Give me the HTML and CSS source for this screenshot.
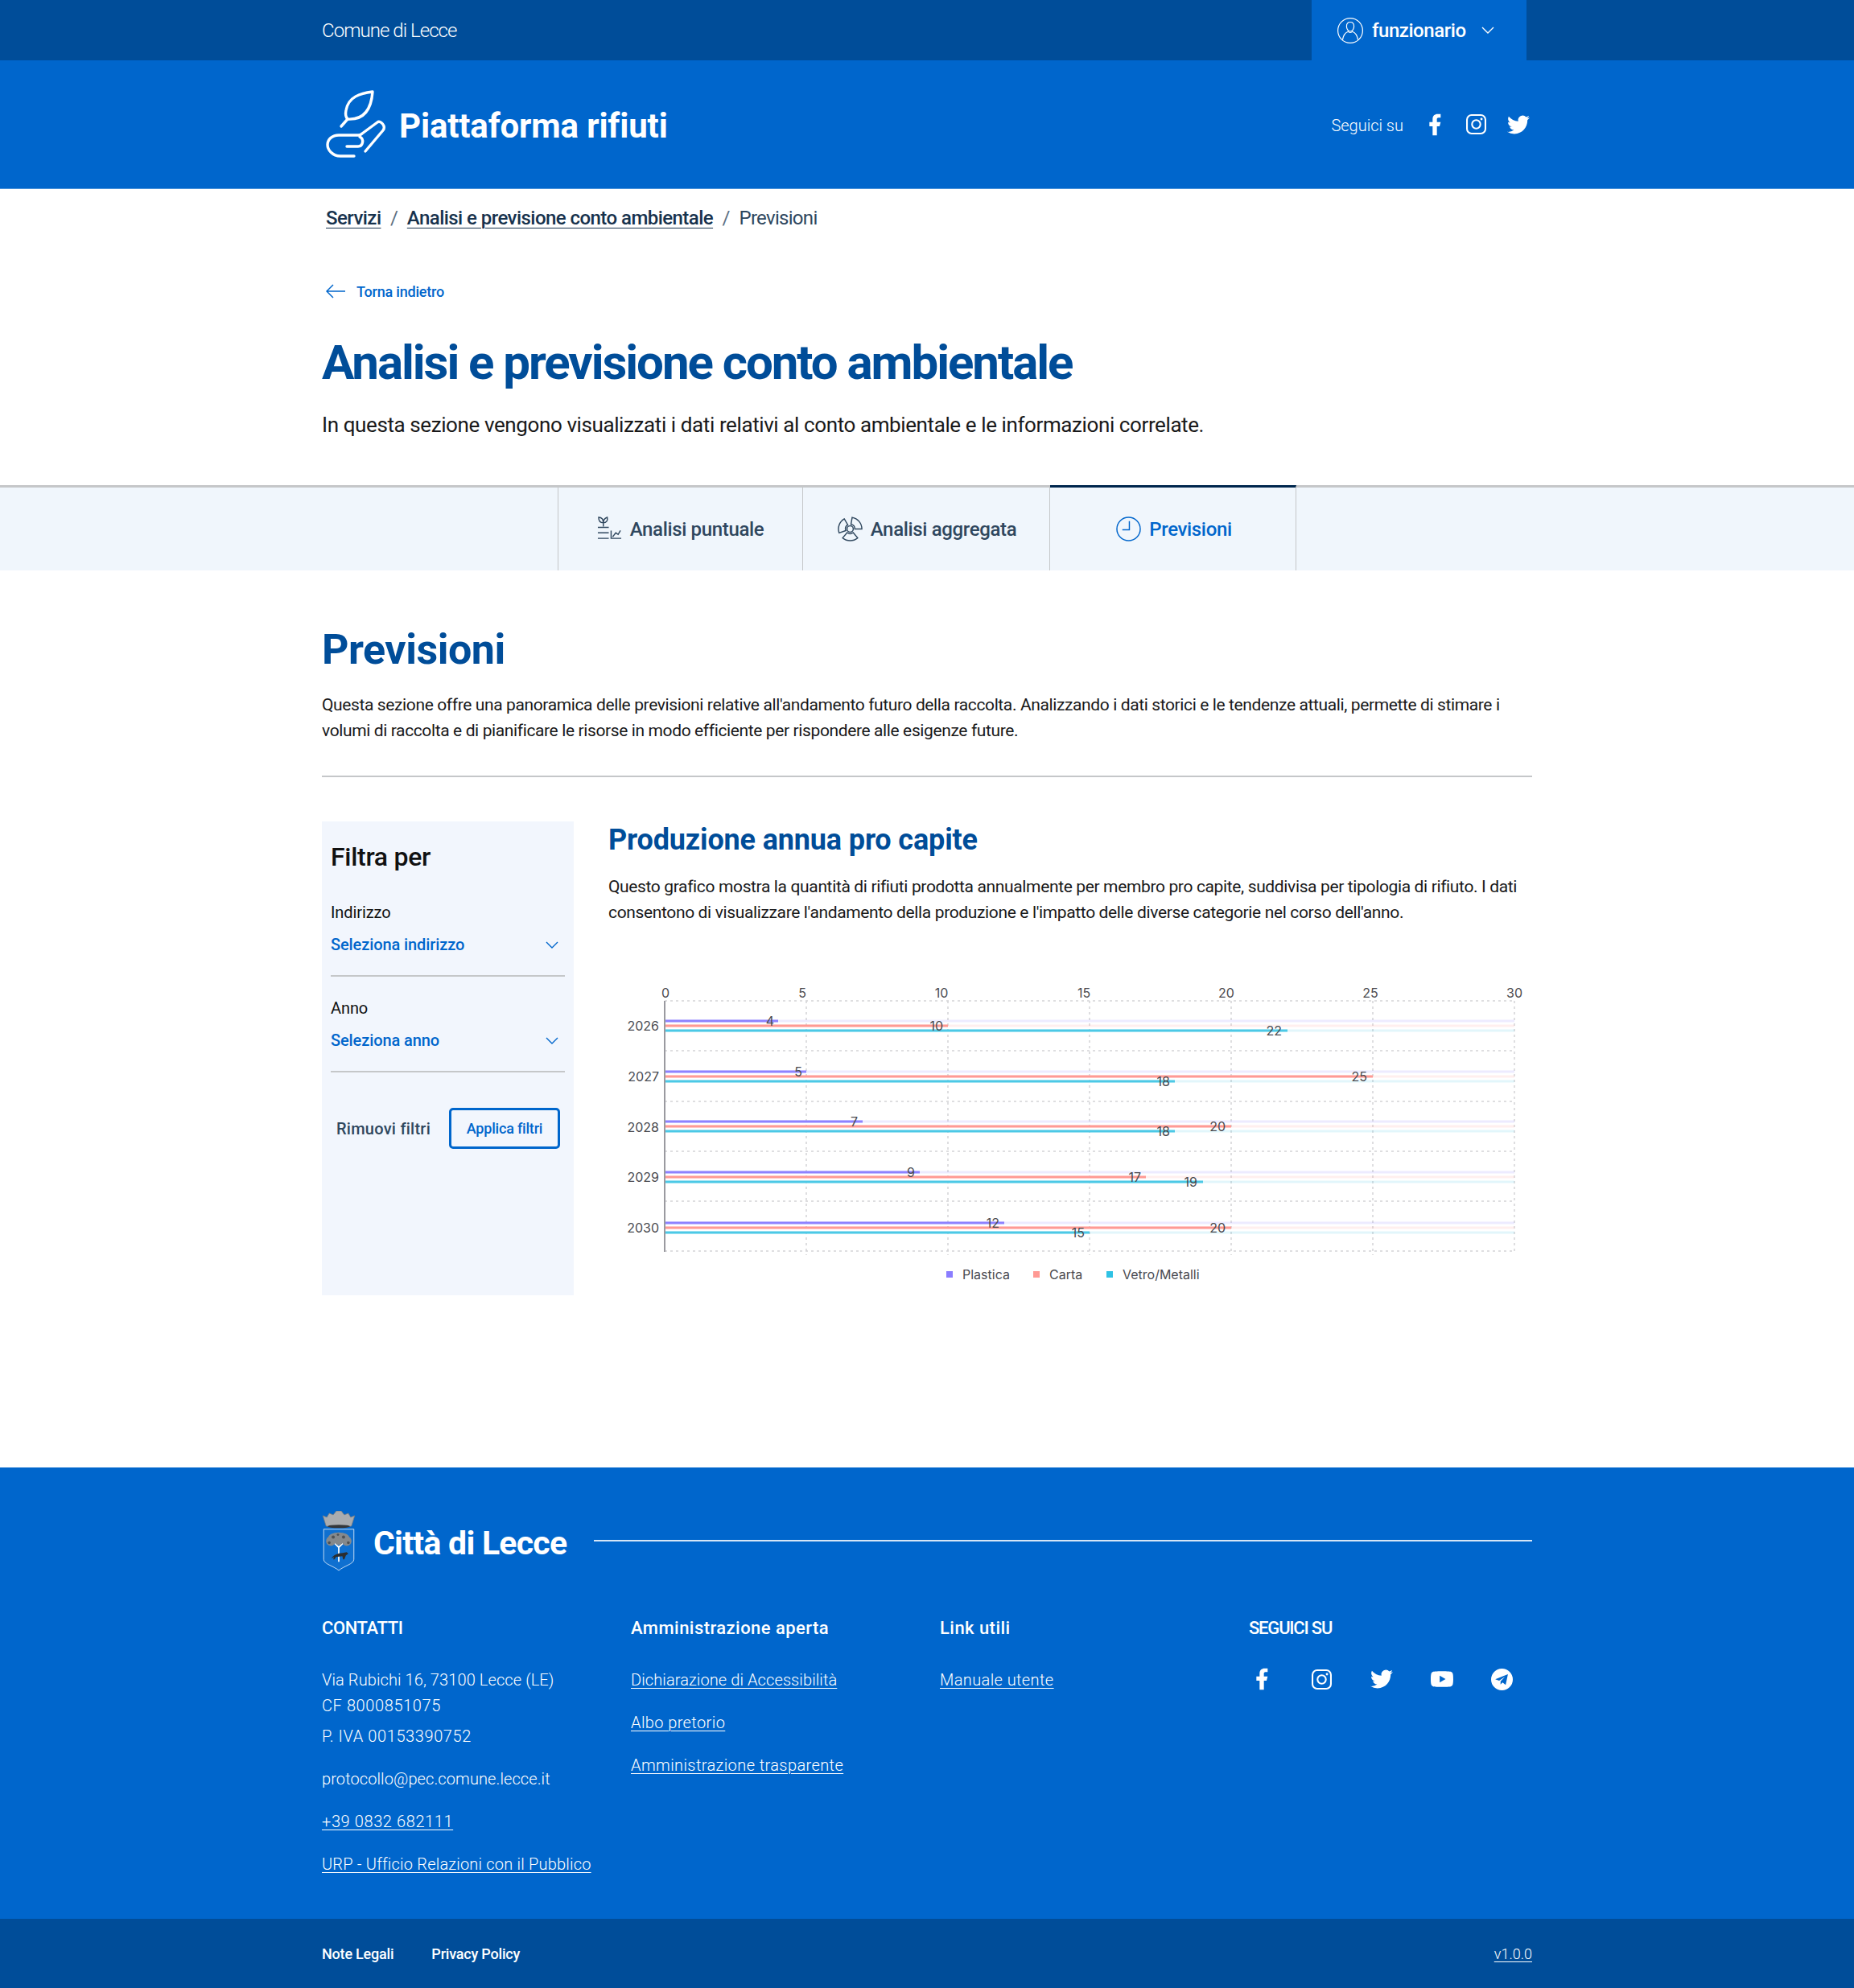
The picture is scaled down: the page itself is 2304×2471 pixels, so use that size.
FILE: index.html
```html
<!DOCTYPE html>
<html lang="it">
<head>
<meta charset="utf-8">
<title>Analisi e previsione conto ambientale</title>
<link rel="stylesheet" href="styles.css">
</head>
<body>
<svg class="defs" width="0" height="0" aria-hidden="true">
  <symbol id="i-fb" viewBox="0 0 24 24"><path d="M14 13.5h2.5l1-4H14v-2c0-1.03 0-2 2-2h1.5V2.14c-.326-.043-1.557-.14-2.857-.14C11.928 2 10 3.657 10 6.7v2.8H7v4h3V22h4v-8.5z"/></symbol>
  <symbol id="i-ig" viewBox="0 0 24 24"><rect x="1" y="1" width="22" height="22" rx="5.5" fill="none" stroke="currentColor" stroke-width="2"/><circle cx="12" cy="12" r="5" fill="none" stroke="currentColor" stroke-width="2"/><circle cx="18.3" cy="5.7" r="1.4"/></symbol>
  <symbol id="i-tw" viewBox="0 0 24 24"><path d="M23.953 4.57a10 10 0 01-2.825.775 4.958 4.958 0 002.163-2.723c-.951.555-2.005.959-3.127 1.184a4.92 4.92 0 00-8.384 4.482C7.69 8.095 4.067 6.13 1.64 3.162a4.822 4.822 0 00-.666 2.475c0 1.71.87 3.213 2.188 4.096a4.904 4.904 0 01-2.228-.616v.06a4.923 4.923 0 003.946 4.827 4.996 4.996 0 01-2.212.085 4.936 4.936 0 004.604 3.417 9.867 9.867 0 01-6.102 2.105c-.39 0-.779-.023-1.17-.067a13.995 13.995 0 007.557 2.209c9.053 0 13.998-7.496 13.998-13.985 0-.21 0-.42-.015-.63A9.935 9.935 0 0024 4.59z"/></symbol>
  <symbol id="i-yt" viewBox="0 0 24 24"><path d="M23.498 6.186a3.016 3.016 0 0 0-2.122-2.136C19.505 3.545 12 3.545 12 3.545s-7.505 0-9.377.505A3.017 3.017 0 0 0 .502 6.186C0 8.07 0 12 0 12s0 3.93.502 5.814a3.016 3.016 0 0 0 2.122 2.136c1.871.505 9.376.505 9.376.505s7.505 0 9.377-.505a3.015 3.015 0 0 0 2.122-2.136C24 15.93 24 12 24 12s0-3.93-.502-5.814zM9.545 15.568V8.432L15.818 12l-6.273 3.568z"/></symbol>
  <symbol id="i-tg" viewBox="0 0 24 24"><path fill-rule="evenodd" d="M12 0a12 12 0 1 0 0 24a12 12 0 0 0 0-24zM18.6 6.2L4.6 11.7l4.3 1.6 6.6-4.4-5 5.2-.1 3.5 2.3-2.2 3.4 2.6z"/></symbol>
  <symbol id="i-chev" viewBox="0 0 16 10"><path d="M1 1l7 7 7-7" fill="none" stroke="currentColor" stroke-width="1.4"/></symbol>
</svg>

<div class="topbar">
  <div class="wrap topbar-in">
    <span class="region">Comune di Lecce</span>
    <div class="user">
      <svg class="user-ico" viewBox="0 0 32 32" fill="none" stroke="currentColor" stroke-width="1.2"><circle cx="16" cy="16" r="15.4"/><path d="M16 5.500c-3 0-4.600 2.200-4.600 5.200 0 3.200 2 6.300 4.600 6.300s4.600-3.100 4.600-6.300c0-3-1.600-5.200-4.600-5.200z"/><path d="M6.500 27.500c.8-5.600 3.900-9.200 6.900-10.300M25.500 27.500c-.8-5.600-3.900-9.200-6.900-10.300"/><path d="M13 17c1.500 2 4.500 2 6 0"/></svg>
      <span class="user-name">funzionario</span>
      <svg class="user-chev"><use href="#i-chev"/></svg>
    </div>
  </div>
</div>

<header class="header">
  <div class="wrap header-in">
    <div class="brand">
      <svg class="brand-ico" viewBox="0 0 80 90" fill="none" stroke="#fff" stroke-width="3.400" stroke-linecap="round" stroke-linejoin="round">
        <path d="M60 4C45 6 30 10 27 27c-1 5 0 9 2 11 16 1 29-7 31-34z"/>
        <path d="M29 38l-8 9"/>
        <path d="M37 84H20C10 84 4 76 4 70c0-7 6-12 14-12h24c2 0 4-1 5-2l19-14c4-3 11 5 7 10L51 78"/>
        <path d="M28 72h14c6 0 8-9 2-12"/>
      </svg>
      <span class="brand-name">Piattaforma rifiuti</span>
    </div>
    <div class="social">
      <span class="social-label">Seguici su</span>
      <svg class="s-fb"><use href="#i-fb"/></svg>
      <svg class="s-ig"><use href="#i-ig"/></svg>
      <svg class="s-tw"><use href="#i-tw"/></svg>
    </div>
  </div>
</header>

<main>
  <div class="wrap">
    <nav class="crumbs"><a href="#">Servizi</a><span class="sep">/</span><a href="#">Analisi e previsione conto ambientale</a><span class="sep">/</span><span class="here">Previsioni</span></nav>
    <a class="back" href="#">
      <svg class="back-ico" viewBox="0 0 24 18" fill="none" stroke="currentColor" stroke-width="1.500"><path d="M9 1L1 9l8 8M1 9h23"/></svg>
      <span>Torna indietro</span>
    </a>
    <h1 class="title">Analisi e previsione conto ambientale</h1>
    <p class="lead">In questa sezione vengono visualizzati i dati relativi al conto ambientale e le informazioni correlate.</p>
  </div>

  <div class="tabs">
    <a class="tab tab-a" href="#">
      <svg class="tab-ico" viewBox="0 0 32 32" fill="none" stroke="currentColor" stroke-width="1.500">
        <path d="M8 13V8M8 8C4 8 2 5 2 1c4 0 6 3 6 7zM8 8c0-4 2-6 5-7 1 4-1 7-5 7z"/>
        <path d="M1 14h14M1 21h14M1 28h14"/>
        <path d="M18 18v10h13M20 26l4-5 3 2 3-5"/>
      </svg>
      <span>Analisi puntuale</span>
    </a>
    <a class="tab tab-b" href="#">
      <svg class="tab-ico" viewBox="0 0 32 32" fill="none" stroke="currentColor" stroke-width="1.500">
        <circle cx="16" cy="16" r="4"/>
        <path d="M17 10.100L18.600 1.200A15 15 0 0 1 31 16H22A6 6 0 0 0 17 10.100Z"/>
        <path d="M19.900 20.600L25.600 27.500A15 15 0 0 1 6.400 27.500L12.100 20.600A6 6 0 0 0 19.900 20.600Z"/>
        <path d="M10.400 18.100L1.900 21.100A15 15 0 0 1 8.500 3L13 10.800A6 6 0 0 0 10.400 18.100Z"/>
      </svg>
      <span>Analisi aggregata</span>
    </a>
    <a class="tab tab-c is-active" href="#">
      <svg class="tab-ico" viewBox="0 0 32 32" fill="none" stroke="currentColor" stroke-width="1.500"><circle cx="16" cy="16" r="15"/><path d="M17 6v11H8"/></svg>
      <span>Previsioni</span>
    </a>
  </div>

  <div class="wrap">
    <h2 class="sec-title">Previsioni</h2>
    <p class="sec-text">Questa sezione offre una panoramica delle previsioni relative all'andamento futuro della raccolta. Analizzando i dati storici e le tendenze attuali, permette di stimare i volumi di raccolta e di pianificare le risorse in modo efficiente per rispondere alle esigenze future.</p>
    <hr class="rule">
    <div class="content">
      <aside class="filters">
        <h3 class="f-title">Filtra per</h3>
        <div class="f-label f-first">Indirizzo</div>
        <div class="f-select"><span>Seleziona indirizzo</span><svg class="f-chev"><use href="#i-chev"/></svg></div>
        <div class="f-label">Anno</div>
        <div class="f-select"><span>Seleziona anno</span><svg class="f-chev"><use href="#i-chev"/></svg></div>
        <div class="f-actions">
          <button class="btn-ghost" type="button">Rimuovi filtri</button>
          <button class="btn-outline" type="button">Applica filtri</button>
        </div>
      </aside>
      <section class="chart-col">
        <h3 class="chart-title">Produzione annua pro capite</h3>
        <p class="chart-text">Questo grafico mostra la quantità di rifiuti prodotta annualmente per membro pro capite, suddivisa per tipologia di rifiuto. I dati consentono di visualizzare l'andamento della produzione e l'impatto delle diverse categorie nel corso dell'anno.</p>
        <svg class="chart" viewBox="756 1210 1148 400">
          <g class="grid">
            <path d="M826 1244H1882M826 1306H1882M826 1369H1882M826 1431H1882M826 1493H1882M826 1555H1882"/>
            <path d="M1002 1244V1560M1178 1244V1560M1354 1244V1560M1530 1244V1560M1706 1244V1560M1882 1244V1555"/>
          </g>
          <g class="b1 bg"><path d="M826 1269H1882M826 1332H1882M826 1394H1882M826 1457H1882M826 1520H1882"/></g>
          <g class="b2 bg"><path d="M826 1275H1882M826 1338H1882M826 1400H1882M826 1463H1882M826 1526H1882"/></g>
          <g class="b3 bg"><path d="M826 1281H1882M826 1344H1882M826 1406H1882M826 1469H1882M826 1532H1882"/></g>
          <g class="b1"><path d="M826 1269H967M826 1332H1002M826 1394H1072M826 1457H1143M826 1520H1248"/></g>
          <g class="b2"><path d="M826 1275H1178M826 1338H1706M826 1400H1530M826 1463H1424M826 1526H1530"/></g>
          <g class="b3"><path d="M826 1281H1600M826 1344H1460M826 1406H1460M826 1469H1495M826 1532H1354"/></g>
          <path class="axis" d="M826 1244V1556"/>
          <g class="ticks">
            <text x="827" y="1240">0</text><text x="997" y="1240">5</text><text x="1170" y="1240">10</text><text x="1347" y="1240">15</text><text x="1524" y="1240">20</text><text x="1703" y="1240">25</text><text x="1882" y="1240">30</text>
          </g>
          <g class="years">
            <text x="819" y="1281">2026</text><text x="819" y="1344">2027</text><text x="819" y="1407">2028</text><text x="819" y="1469">2029</text><text x="819" y="1532">2030</text>
          </g>
          <g class="vals">
            <text x="962" y="1275">4</text><text x="1172" y="1281">10</text><text x="1593" y="1287">22</text>
            <text x="997" y="1338">5</text><text x="1699" y="1344">25</text><text x="1454" y="1350">18</text>
            <text x="1066" y="1400">7</text><text x="1523" y="1406">20</text><text x="1454" y="1412">18</text>
            <text x="1137" y="1463">9</text><text x="1418" y="1469">17</text><text x="1488" y="1475">19</text>
            <text x="1242" y="1526">12</text><text x="1523" y="1532">20</text><text x="1348" y="1538">15</text>
          </g>
          <g class="legend">
            <rect class="l1" x="1176" y="1580" width="8" height="8"/><text x="1196" y="1590">Plastica</text>
            <rect class="l2" x="1284" y="1580" width="8" height="8"/><text x="1304" y="1590">Carta</text>
            <rect class="l3" x="1375" y="1580" width="8" height="8"/><text x="1395" y="1590">Vetro/Metalli</text>
          </g>
        </svg>
      </section>
    </div>
  </div>
</main>

<footer class="footer">
  <div class="wrap">
    <div class="f-brand">
      <svg class="crest" viewBox="0 0 42 76">
        <path d="M1 6l5 2 3-5 5 2 4-5h6l4 5 5-2 3 5 5-2-4 13c-6 2-26 2-32 0z" fill="#a9acaf" stroke="#7a7e82" stroke-width=".8"/>
        <ellipse cx="21" cy="19.500" rx="14" ry="2" fill="#34373a"/>
        <path d="M2 23h38v38c0 6-12 8-19 14C14 69 2 67 2 61z" fill="#0f70d0" stroke="#d7e7f8" stroke-width=".9"/>
        <path d="M21 64V44M21 46l-7-7M21 46l7-7" stroke="#fff" stroke-width="1.800" fill="none"/>
        <g fill="#85898c">
          <ellipse cx="21" cy="33" rx="13" ry="6"/><ellipse cx="11" cy="38" rx="6" ry="6"/><ellipse cx="31" cy="38" rx="6" ry="6"/><ellipse cx="21" cy="39" rx="5" ry="4"/>
        </g>
        <g fill="#4e5256"><circle cx="14" cy="33" r="2"/><circle cx="27" cy="33" r="2"/><circle cx="9" cy="40" r="1.800"/><circle cx="33" cy="40" r="1.800"/><circle cx="20" cy="30" r="1.500"/></g>
        <path d="M12 60c1-4 8-7 14-7l5-1 2 2-3 2-2 5h-1.500l-1-4-8 1-2 3H14l1-3z" fill="#2b2d30"/>
      </svg>
      <span class="f-name">Città di Lecce</span>
      <span class="f-line"></span>
    </div>
    <div class="cols">
      <div class="col">
        <h4 class="col-title caps-a">CONTATTI</h4>
        <p class="c-item c-first">Via Rubichi 16, 73100 Lecce (LE)</p>
        <p class="c-item c-num">CF 8000851075</p>
        <p class="c-item c-num c-s6">P. IVA 00153390752</p>
        <p class="c-item c-s21">protocollo@pec.comune.lecce.it</p>
        <p class="c-item c-num c-s21"><a href="#">+39 0832 682111</a></p>
        <p class="c-item c-urp c-s21"><a href="#">URP - Ufficio Relazioni con il Pubblico</a></p>
      </div>
      <div class="col">
        <h4 class="col-title">Amministrazione aperta</h4>
        <p class="c-item c-first"><a href="#">Dichiarazione di Accessibilità</a></p>
        <p class="c-item c-link c-s21"><a href="#">Albo pretorio</a></p>
        <p class="c-item c-link c-s21"><a href="#">Amministrazione trasparente</a></p>
      </div>
      <div class="col">
        <h4 class="col-title">Link utili</h4>
        <p class="c-item c-link c-first"><a href="#">Manuale utente</a></p>
      </div>
      <div class="col">
        <h4 class="col-title caps-b">SEGUICI SU</h4>
        <div class="f-social">
          <svg class="s-fb"><use href="#i-fb"/></svg>
          <svg class="s-ig"><use href="#i-ig"/></svg>
          <svg class="s-tw"><use href="#i-tw"/></svg>
          <svg class="s-yt"><use href="#i-yt"/></svg>
          <svg class="s-tg"><use href="#i-tg"/></svg>
        </div>
      </div>
    </div>
  </div>
  <div class="subfooter">
    <div class="wrap sub-in">
      <div class="sub-links"><a href="#">Note Legali</a><a href="#">Privacy Policy</a></div>
      <a class="version" href="#">v1.0.0</a>
    </div>
  </div>
</footer>
</body>
</html>
```
FILE: styles.css
```css
* { box-sizing: border-box; }
html, body { margin: 0; padding: 0; }
body { font-family: Roboto, "Open Sans", sans-serif; color: #19191a; background: #fff; width: 2304px; }
a { color: inherit; }
h1, h2, h3, h4, p { margin: 0; }
.defs { position: absolute; }
svg { fill: currentColor; display: block; flex: none; }
.wrap { width: 1504px; margin: 0 auto; }

.topbar { background: #004d99; height: 75px; color: #fff; }
.topbar-in { display: flex; justify-content: space-between; height: 75px; align-items: center; }
.region { font-size: 24px; font-weight: 300; letter-spacing: -0.95px; padding-top: 1px; }
.user { width: 267px; height: 75px; margin-right: 7px; background: #0066cc; display: flex; align-items: center; padding-left: 32px; }
.user-ico { width: 32px; height: 32px; fill: none; margin-right: 11px; }
.user-name { font-size: 24px; font-weight: 500; letter-spacing: -0.45px; width: 136px; padding-top: 1px; }
.user-chev { width: 16px; height: 10px; }

.header { background: #0066cc; height: 160px; color: #fff; border-bottom: 1px solid #4d94db; }
.header-in { display: flex; justify-content: space-between; align-items: center; height: 159px; }
.brand { display: flex; align-items: center; padding-left: 3px; }
.brand-ico { width: 80px; height: 90px; fill: none; margin-right: 14px; }
.brand-name { font-size: 42px; font-weight: 700; letter-spacing: -0.15px; padding-top: 3px; margin-left: -1px; }
.social { display: flex; align-items: center; }
.social-label { font-size: 20px; font-weight: 300; margin-right: 23px; padding-top: 2px; }
.s-fb { width: 32px; height: 32px; }
.s-ig { width: 25px; height: 25px; }
.s-tw { width: 28px; height: 28px; }
.s-yt { width: 28px; height: 28px; }
.s-tg { width: 27px; height: 27px; }
.social .s-fb { margin-right: 23px; }
.social .s-ig { margin-right: 26px; }
.social .s-tw { margin-right: 3px; }

.crumbs { height: 72px; display: flex; align-items: center; padding-left: 5px; font-size: 24px; color: #17324d; letter-spacing: -0.55px; }
.crumbs a { font-weight: 500; text-underline-offset: 4px; text-decoration-thickness: 1px; }
.crumbs .sep { margin: 0 11.5px; color: #5c6f82; }
.crumbs .here { color: #2f475e; font-weight: 400; letter-spacing: -0.7px; }
.back { display: flex; align-items: center; height: 30px; margin-top: 40px; padding-left: 5px; color: #0066cc; font-size: 18px; font-weight: 500; text-decoration: none; letter-spacing: -0.2px; }
.back-ico { width: 24px; height: 18px; fill: none; margin-right: 14px; }
.title { font-size: 60px; line-height: 72px; margin-top: 38px; font-weight: 700; color: #004d99; letter-spacing: -2.05px; }
.lead { font-size: 26px; line-height: 40px; margin-top: 21px; letter-spacing: -0.4px; }

.tabs { margin-top: 55px; height: 106px; display: flex; justify-content: center; background: #f0f6fc; border-top: 3px solid #c5c7c9; }
.tab { display: flex; align-items: center; justify-content: center; gap: 10px; height: 106px; margin-top: -3px; border-top: 3px solid transparent; border-right: 1px solid #c5c7c9; font-size: 24px; font-weight: 500; color: #2f475e; text-decoration: none; letter-spacing: -0.35px; }
.tab-a { width: 305px; border-left: 1px solid #c5c7c9; }
.tab-b { width: 307px; padding-left: 2px; }
.tab-c { width: 306px; padding-left: 3px; }
.tab.is-active { color: #0066cc; border-top-color: #00264d; }
.tab-ico { width: 31px; height: 31px; fill: none; }

.sec-title { font-size: 52px; line-height: 62px; margin-top: 68px; font-weight: 700; color: #004d99; letter-spacing: -0.5px; }
.sec-text { font-size: 21px; line-height: 32px; margin-top: 21px; letter-spacing: -0.38px; }
.rule { margin: 40px 0 0; border: 0; border-top: 2px solid #c5c7c9; }

.content { margin-top: 55px; display: grid; grid-template-columns: 313px 1fr; column-gap: 43px; }
.filters { background: #f2f6fd; height: 589px; padding: 24px 11px 0; }
.f-title { font-size: 32px; line-height: 40px; font-weight: 500; color: #111; letter-spacing: -0.3px; }
.f-label { font-size: 20px; line-height: 30px; margin-top: 24px; font-weight: 400; color: #111; letter-spacing: -0.1px; }
.f-first { margin-top: 34px; }
.f-select { display: flex; justify-content: space-between; align-items: center; height: 54px; margin-top: 11px; padding: 0 8px 24px 0; border-bottom: 2px solid #c5c7c9; color: #0066cc; font-size: 20px; font-weight: 500; letter-spacing: -0.1px; }
.f-chev { width: 16px; height: 10px; margin-top: 2px; }
.f-actions { display: flex; align-items: center; margin-top: 44px; padding-left: 7px; gap: 23px; }
.btn-ghost { padding: 0; border: 0; background: none; font: 500 20px Roboto, sans-serif; color: #2f475e; letter-spacing: 0.25px; width: 117px; white-space: nowrap; }
.btn-outline { width: 138px; height: 51px; padding: 0; border: 3px solid #0066cc; border-radius: 5px; background: none; font: 500 18px Roboto, sans-serif; color: #0066cc; letter-spacing: -0.2px; white-space: nowrap; }

.chart-title { font-size: 36px; line-height: 44px; padding-top: 1px; font-weight: 700; color: #004d99; letter-spacing: -0.15px; }
.chart-text { font-size: 21px; line-height: 32px; margin-top: 20px; letter-spacing: -0.36px; }
.chart { width: 1148px; height: 400px; margin-top: 60px; fill: none; font-family: Inter, sans-serif; }
.grid path { stroke: #d4d4d6; stroke-width: 1.500; stroke-dasharray: 3 4; }
.b1 path, .b2 path, .b3 path { stroke-width: 3; }
.b1 { stroke: #8e82ff; }
.b2 { stroke: #ff9a94; }
.b3 { stroke: #4cc9e6; }
.bg { opacity: .16; }
.axis { stroke: #9a9aa0; stroke-width: 2; }
.ticks text, .years text, .vals text, .legend text { fill: #4a4a4f; font-size: 16px; }
.ticks text { text-anchor: middle; }
.years text { text-anchor: end; }
.vals text { text-anchor: end; }
.l1 { fill: #8a7dff; }
.l2 { fill: #ff9a94; }
.l3 { fill: #2fc2e4; }

.footer { margin-top: 214px; background: #0066cc; color: #fff; }
.f-brand { display: flex; align-items: center; padding-top: 54px; }
.crest { width: 42px; height: 75px; margin-right: 22px; fill: none; }
.f-name { font-size: 41px; line-height: 69px; font-weight: 700; letter-spacing: -0.75px; padding-top: 6px; }
.f-line { flex: 1; height: 2px; background: #d6e6f7; margin-left: 34px; margin-top: -1px; }
.cols { display: grid; grid-template-columns: repeat(4, 384px); height: 376px; margin-top: 56px; }
.col-title { font-size: 22px; line-height: 30px; font-weight: 500; letter-spacing: 0.45px; }
.caps-a { letter-spacing: -0.4px; }
.caps-b { letter-spacing: -1.2px; }
.c-item { font-size: 20px; line-height: 32px; font-weight: 300; letter-spacing: 0.1px; }
.c-item a { text-underline-offset: 3px; text-decoration-thickness: 1px; }
.c-num { letter-spacing: 0.6px; }
.c-link { letter-spacing: 0.4px; }
.c-urp { letter-spacing: 0.2px; }
.c-first { margin-top: 33px; }
.c-s6 { margin-top: 6px; }
.c-s21 { margin-top: 21px; }
.f-social { display: flex; align-items: center; margin-top: 32px; }
.f-social .s-fb { margin-right: 46px; }
.f-social .s-ig { margin-right: 48px; }
.f-social .s-tw { margin-right: 47px; }
.f-social .s-yt { margin-right: 47px; }
.subfooter { background: #004d99; height: 86px; }
.sub-in { display: flex; justify-content: space-between; align-items: center; height: 86px; font-size: 18px; }
.sub-links { display: flex; gap: 47px; font-weight: 500; letter-spacing: -0.2px; }
.sub-links a { text-decoration: none; }
.version { font-weight: 300; text-underline-offset: 3px; }
```
